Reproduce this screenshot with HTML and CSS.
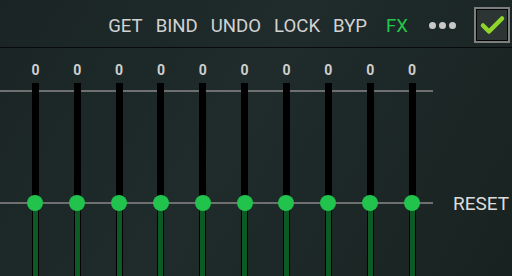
FILE: index.html
```html
<!DOCTYPE html>
<html lang="en">
<head>
    <meta charset="UTF-8">
    <meta name="viewport" content="width=device-width, initial-scale=1.0">
    <title>Equalizer</title>
    <link rel="stylesheet" href="styles.css">
</head>
<body>

    <div class="toolbar">
        <span class="tool">GET</span>
        <span class="tool">BIND</span>
        <span class="tool">UNDO</span>
        <span class="tool">LOCK</span>
        <span class="tool">BYP</span>
        <span class="tool fx">FX</span>
        <span class="more"><i></i><i></i><i></i></span>
        <span class="check">
            <svg width="30" height="30" viewBox="0 0 30 30">
                <polyline points="6,15.5 12,21.5 25,8.5" fill="none" stroke="#8fd62b" stroke-width="4.5" stroke-linecap="round" stroke-linejoin="round"/>
            </svg>
        </span>
    </div>

    <div class="main">
        <div class="eq">
            <div class="band"><span class="value">0</span><div class="track"><div class="top"></div><div class="fill"></div><span class="knob"></span></div></div>
            <div class="band"><span class="value">0</span><div class="track"><div class="top"></div><div class="fill"></div><span class="knob"></span></div></div>
            <div class="band"><span class="value">0</span><div class="track"><div class="top"></div><div class="fill"></div><span class="knob"></span></div></div>
            <div class="band"><span class="value">0</span><div class="track"><div class="top"></div><div class="fill"></div><span class="knob"></span></div></div>
            <div class="band"><span class="value">0</span><div class="track"><div class="top"></div><div class="fill"></div><span class="knob"></span></div></div>
            <div class="band"><span class="value">0</span><div class="track"><div class="top"></div><div class="fill"></div><span class="knob"></span></div></div>
            <div class="band"><span class="value">0</span><div class="track"><div class="top"></div><div class="fill"></div><span class="knob"></span></div></div>
            <div class="band"><span class="value">0</span><div class="track"><div class="top"></div><div class="fill"></div><span class="knob"></span></div></div>
            <div class="band"><span class="value">0</span><div class="track"><div class="top"></div><div class="fill"></div><span class="knob"></span></div></div>
            <div class="band"><span class="value">0</span><div class="track"><div class="top"></div><div class="fill"></div><span class="knob"></span></div></div>
        </div>
        <div class="side">
            <span class="reset">RESET</span>
        </div>
    </div>

</body>
</html>
```

FILE: styles.css
```css
html, body {
    margin: 0;
    padding: 0;
    height: 100%;
}

body {
    font-family: Roboto, "Liberation Sans", sans-serif;
    background: linear-gradient(120deg, #1a2424 0%, #1f2c2b 45%, #182221 100%);
    color: #d6d6d6;
    overflow: hidden;
}

.toolbar {
    height: 43px;
    padding-top: 4px;
    display: flex;
    align-items: center;
    justify-content: flex-end;
    gap: 13px;
    padding-right: 2px;
    border-bottom: 1px solid #070b0b;
}

.tool {
    font-size: 18.6px;
    line-height: 22px;
    color: #d2d2d2;
    padding-top: 1px;
}

.fx {
    color: #22c84a;
    margin-left: 6px;
}

.more {
    display: flex;
    gap: 3px;
    margin-left: 8px;
}

.more i {
    width: 7px;
    height: 7px;
    border-radius: 50%;
    background: #c8c8c8;
}

.check {
    width: 30px;
    height: 30px;
    margin-left: 5px;
    margin-bottom: 1px;
    background: #2c3533;
    border: 2px solid #7d7f7e;
    box-shadow: inset 0 0 0 1px #050505;
    padding: 1px;
    display: flex;
}

.main {
    display: flex;
    height: 228px;
}

.eq {
    width: 433px;
    display: flex;
    padding-left: 14.5px;
    box-sizing: border-box;
    background:
        linear-gradient(#6e6f6f, #6e6f6f) 0 42px / 100% 2px no-repeat,
        linear-gradient(#6e6f6f, #6e6f6f) 0 154px / 100% 2px no-repeat;
}

.band {
    width: 41.9px;
    display: flex;
    flex-direction: column;
    align-items: center;
    padding-top: 14px;
}

.value {
    font-size: 14px;
    font-weight: bold;
    line-height: 16px;
    color: #cfcfcf;
    margin-bottom: 5px;
}

.track {
    position: relative;
    width: 7px;
    flex: 1;
    display: flex;
    flex-direction: column;
    background: #000;
}

.top {
    height: 120px;
}

.fill {
    flex: 1;
    margin: 0 1px;
    background: #0c5a24;
}

.knob {
    position: absolute;
    left: -4.5px;
    top: 112px;
    width: 16px;
    height: 16px;
    border-radius: 50%;
    background: #22c34d;
}

.side {
    padding-top: 145px;
    padding-left: 20px;
}

.reset {
    font-size: 19px;
    line-height: 22px;
    color: #dcdcdc;
}
```
